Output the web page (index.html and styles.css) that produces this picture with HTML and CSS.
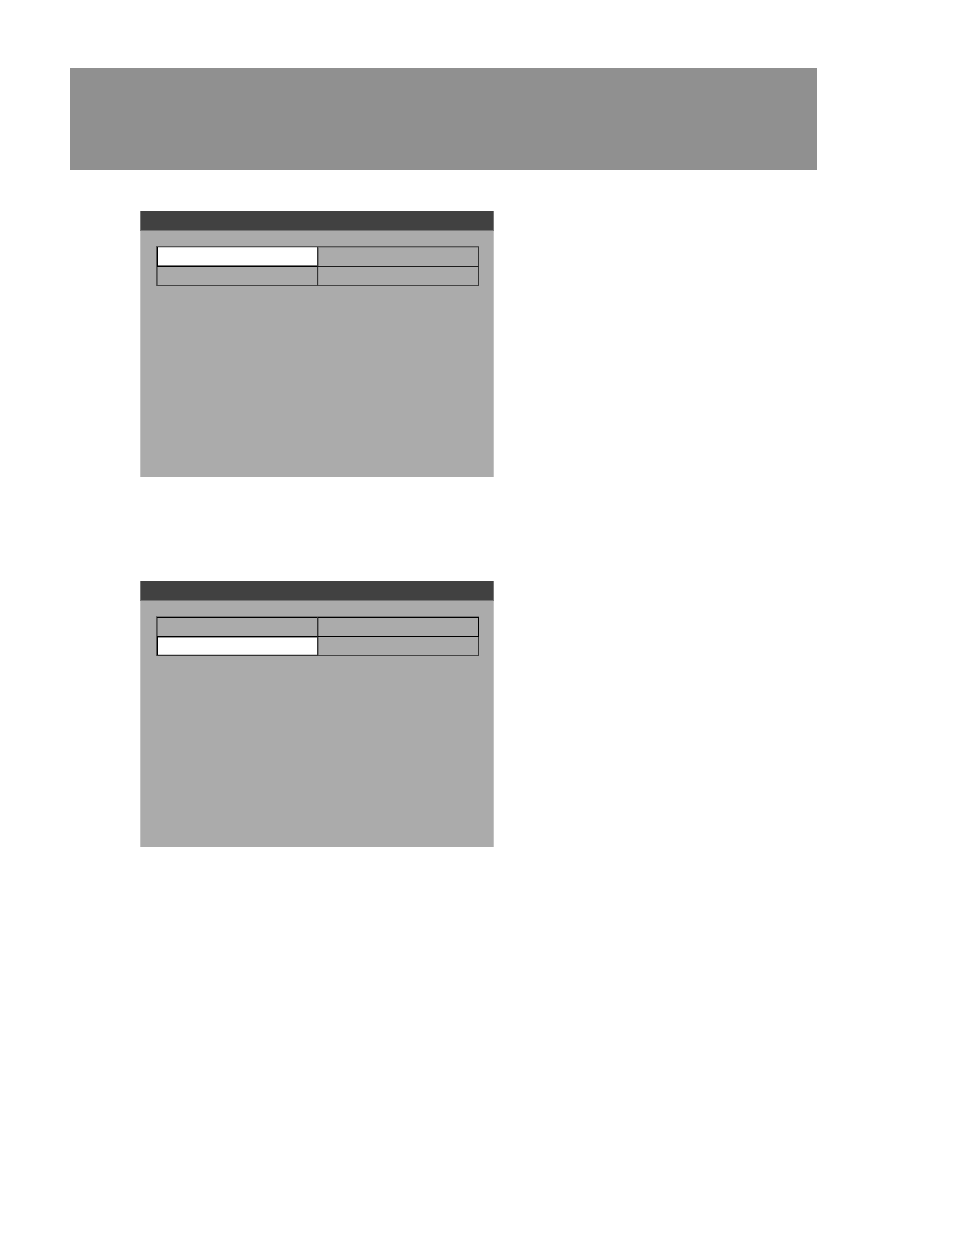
FILE: index.html
```html
<!DOCTYPE html>
<html lang="en">
<head>
<meta charset="utf-8">
<meta name="viewport" content="width=device-width, initial-scale=1">
<title>Menu screens</title>
<link rel="stylesheet" href="styles.css">
</head>
<body>
<header class="banner"></header>
<main class="screens">
  <section class="panel">
    <div class="panel-bar"></div>
    <table class="options">
      <tr><td class="selected"></td><td></td></tr>
      <tr><td></td><td></td></tr>
    </table>
  </section>
  <section class="panel">
    <div class="panel-bar"></div>
    <table class="options options-strong">
      <tr><td></td><td></td></tr>
      <tr><td class="selected"></td><td></td></tr>
    </table>
  </section>
</main>
</body>
</html>
```

FILE: styles.css
```css
* {
  box-sizing: border-box;
}

body {
  margin: 0;
  padding: 68px 137px 40px 70px;
  background: #fff;
  font-family: "Liberation Sans", Arial, sans-serif;
}

.banner {
  height: 102px;
  background: #909090;
}

.screens {
  display: grid;
  grid-template-columns: 354fr 323fr;
  row-gap: 104px;
  padding: 41px 0 0 70px;
}

.panel {
  grid-column: 1;
  aspect-ratio: 354 / 266;
  background: #ababab;
  border-left: 1px solid #c2c2c2;
  border-right: 1px solid #c2c2c2;
}

.panel-bar {
  height: 20px;
  margin: 0 -1px;
  background: #414141;
  border: 1px solid #777;
  border-top: 0;
}

/* Two equal columns of menu cells */
.options {
  width: calc(100% - 29px);
  margin: 15px 14px 0 15px;
  table-layout: fixed;
  border-collapse: separate;
  border-spacing: 0;
  border-top: 1px solid #555;
  border-left: 1px solid #555;
}

.options td {
  height: 20px;
  padding: 0;
  border-right: 1px solid #333;
  border-bottom: 1px solid #1c1c1c;
}

.options td:first-child {
  box-shadow: inset 1px 0 #666;
}

.options tr:first-child td:last-child {
  box-shadow: inset 1px 0 #777, inset 0 1px #898989;
}

.options tr:last-child td {
  height: 19px;
  border-bottom-color: #444;
}

.options tr:last-child td:last-child {
  box-shadow: inset 1px 0 #999;
}

.options tr td.selected {
  background: #fff;
  border-bottom-color: #000;
  box-shadow: inset 1px 0 #000, inset 0 1px #ccc, inset 0 -1px #777;
}

.options-strong {
  border-top-color: #777;
}

.options-strong tr:first-child td {
  border-bottom-color: #000;
  box-shadow: inset 0 1px #000, inset 1px 0 #666;
}

.options-strong tr:first-child td:last-child {
  border-right-color: #000;
  box-shadow: inset 0 1px #000, inset 1px 0 #777;
}

.options-strong tr:last-child td:last-child {
  box-shadow: inset 1px 0 #777;
}

.options-strong tr:last-child td.selected {
  border-bottom-color: #333;
  box-shadow: inset 1px 0 #000, inset 0 1px #999, inset 0 -1px #ccc;
}
```
